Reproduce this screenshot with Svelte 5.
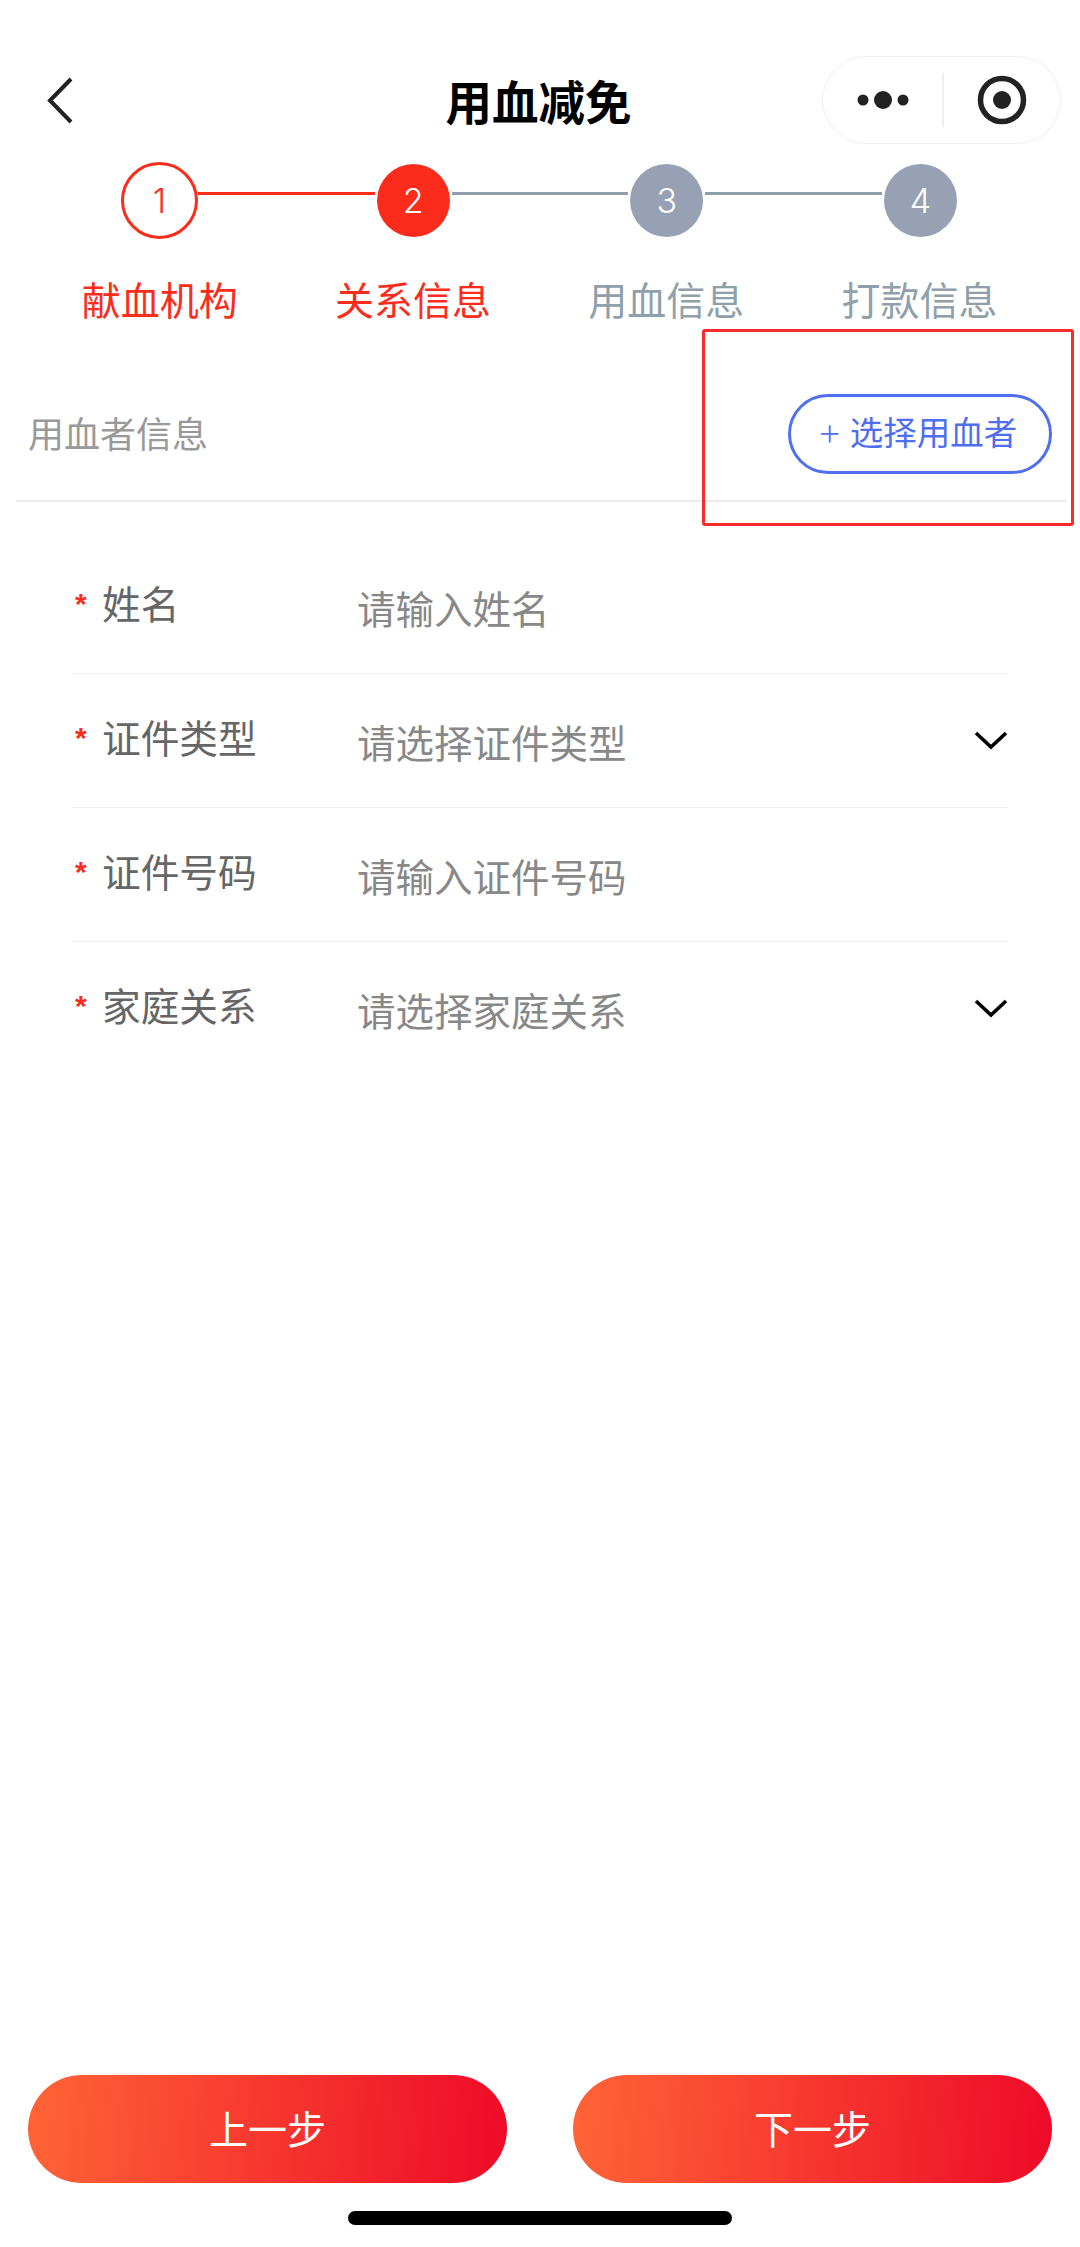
<script>
	const steps = [
		{ n: 1, label: '献血机构', state: 'done' },
		{ n: 2, label: '关系信息', state: 'active' },
		{ n: 3, label: '用血信息', state: 'todo' },
		{ n: 4, label: '打款信息', state: 'todo' }
	];
	const fields = [
		{ label: '姓名', placeholder: '请输入姓名', select: false },
		{ label: '证件类型', placeholder: '请选择证件类型', select: true },
		{ label: '证件号码', placeholder: '请输入证件号码', select: false },
		{ label: '家庭关系', placeholder: '请选择家庭关系', select: true }
	];
</script>

<div class="page">
	<header class="nav">
		<button class="back" aria-label="返回">
			<svg width="26" height="48" viewBox="0 0 26 48" fill="none">
				<path d="M24 2 L3 23.5 L24 45" stroke="#222" stroke-width="4" />
			</svg>
		</button>
		<h1>用血减免</h1>
		<div class="capsule">
			<svg class="more" width="52" height="20" viewBox="0 0 52 20">
				<circle cx="6" cy="10" r="5.5" fill="#222" />
				<circle cx="26" cy="10" r="9" fill="#222" />
				<circle cx="46" cy="10" r="5.5" fill="#222" />
			</svg>
			<span class="capsule-line"></span>
			<svg class="record" width="50" height="50" viewBox="0 0 50 50" fill="none">
				<circle cx="25" cy="25" r="21.5" stroke="#222" stroke-width="5.5" />
				<circle cx="25" cy="25" r="9" fill="#222" />
			</svg>
		</div>
	</header>

	<div class="track">
		{#each steps as s, i}
			{#if i > 0}
				<span class="line" class:on={s.state !== 'todo'}></span>
			{/if}
			<span class="dot {s.state}">{s.n}</span>
		{/each}
	</div>
	<div class="labels">
		{#each steps as s}
			<span class:on={s.state !== 'todo'}>{s.label}</span>
		{/each}
	</div>

	<section class="head">
		<span class="head-title">用血者信息</span>
		<button class="pick"><span class="plus">+</span>选择用血者</button>
		<div class="mark"></div>
	</section>

	<form class="form">
		{#each fields as f}
			<div class="row">
				<span class="star">*</span>
				<span class="label">{f.label}</span>
				<span class="holder">{f.placeholder}</span>
				{#if f.select}
					<svg class="arrow" width="34" height="20" viewBox="0 0 34 20" fill="none">
						<path d="M2 3 L17 17 L32 3" stroke="#000" stroke-width="3.6" />
					</svg>
				{/if}
			</div>
		{/each}
	</form>

	<footer class="foot">
		<div class="actions">
			<button class="btn">上一步</button>
			<button class="btn">下一步</button>
		</div>
		<div class="home"></div>
	</footer>
</div>

<style>
	:global(body) {
		margin: 0;
		background: #fff;
	}
	.page {
		width: 1080px;
		height: 2247px;
		display: flex;
		flex-direction: column;
		box-sizing: border-box;
		padding-top: 56px;
		font-family: "Noto Sans CJK SC", "Noto Sans", sans-serif;
	}
	button {
		font-family: inherit;
		padding: 0;
		background: none;
		border: none;
	}

	.nav {
		height: 88px;
		display: flex;
		align-items: center;
		justify-content: space-between;
		padding: 0 19px 0 47px;
		position: relative;
	}
	.back {
		display: flex;
		margin-top: 2px;
	}
	.nav h1 {
		position: absolute;
		left: 0;
		right: 3px;
		margin: 0;
		text-align: center;
		font-size: 46.5px;
		line-height: 88px;
		font-weight: 700;
		color: #000;
	}
	.capsule {
		width: 239px;
		height: 88px;
		box-sizing: border-box;
		border: 1px solid #f0f0f0;
		border-radius: 44px;
		display: flex;
		align-items: center;
		padding-left: 34px;
	}
	.more {
		flex: none;
	}
	.capsule-line {
		width: 2px;
		height: 54px;
		background: #f0f0f0;
		margin: 0 33px;
	}

	.track {
		display: flex;
		align-items: flex-start;
		margin: 18px 0 0 121px;
		width: 836px;
	}
	.dot {
		flex: none;
		box-sizing: border-box;
		width: 73px;
		height: 73px;
		margin-top: 2px;
		border-radius: 50%;
		display: flex;
		align-items: center;
		justify-content: center;
		font-family: Inter, sans-serif;
		font-weight: 300;
		font-size: 34px;
		color: #fff;
		background: #98a1b3;
	}
	.dot.active {
		background: #fc2c1c;
	}
	.dot.done {
		width: 77px;
		height: 77px;
		margin-top: 0;
		background: #fff;
		border: 3px solid #fc2c1c;
		color: #fc2c1c;
	}
	.line {
		flex: 1;
		height: 3px;
		margin: 30px 2px 0;
		background: #8fa0aa;
	}
	.line.on {
		background: #fc2c1c;
		margin-left: 0;
	}

	.labels {
		display: grid;
		grid-template-columns: repeat(4, 253.3px);
		margin: 31px 0 0 33px;
		text-align: center;
		font-size: 39px;
		line-height: 56px;
		color: #8fa0aa;
	}
	.labels .on {
		color: #fc2c1c;
	}

	.head {
		position: relative;
		height: 133px;
		margin: 41px 14px 0 16px;
		padding: 0 14px 0 12px;
		border-bottom: 2px solid #ececec;
		display: flex;
		align-items: center;
		justify-content: space-between;
	}
	.head-title {
		font-size: 36px;
		color: #999;
		margin-top: -4px;
	}
	.pick {
		width: 264px;
		height: 80px;
		box-sizing: border-box;
		border: 3px solid #4f6ff0;
		border-radius: 40px;
		color: #4f6ff0;
		font-size: 33.5px;
		display: flex;
		align-items: center;
		justify-content: center;
		padding: 0 6px 6px 0;
	}
	.plus {
		font-family: Inter, sans-serif;
		font-weight: 200;
		margin-right: 7px;
		font-size: 40px;
		line-height: 40px;
	}
	.mark {
		position: absolute;
		left: 686px;
		top: -38px;
		width: 372px;
		height: 197px;
		box-sizing: border-box;
		border: 3px solid #fb2b2b;
		border-radius: 3px;
	}

	.form {
		margin: 38px 72px 0;
	}
	.row {
		height: 134px;
		box-sizing: border-box;
		border-bottom: 1px solid #f1f1f1;
		display: flex;
		align-items: center;
		position: relative;
	}
	.row:last-child {
		border-bottom: none;
	}
	.star {
		position: absolute;
		left: 3px;
		top: 47px;
		font-family: "Liberation Sans", sans-serif;
		font-size: 30px;
		line-height: 34px;
		font-weight: 700;
		color: #fc2c1c;
	}
	.label {
		width: 285px;
		padding-left: 30px;
		box-sizing: border-box;
		font-size: 38.7px;
		color: #666;
		margin-top: -10px;
	}
	.holder {
		font-size: 38.5px;
		color: #888;
		margin-top: 0;
	}
	.arrow {
		position: absolute;
		right: 0;
		top: 56px;
	}

	.foot {
		margin-top: auto;
		padding: 0 28px 22px;
	}
	.actions {
		display: flex;
		justify-content: space-between;
	}
	.btn {
		width: 479px;
		height: 108px;
		border-radius: 54px;
		background: linear-gradient(95deg, #ff6436, #ee0a28);
		color: #fff;
		font-size: 39px;
		padding-bottom: 5px;
	}
	.home {
		width: 384px;
		height: 14px;
		border-radius: 7px;
		background: #000;
		margin: 28px auto 0;
	}
</style>
